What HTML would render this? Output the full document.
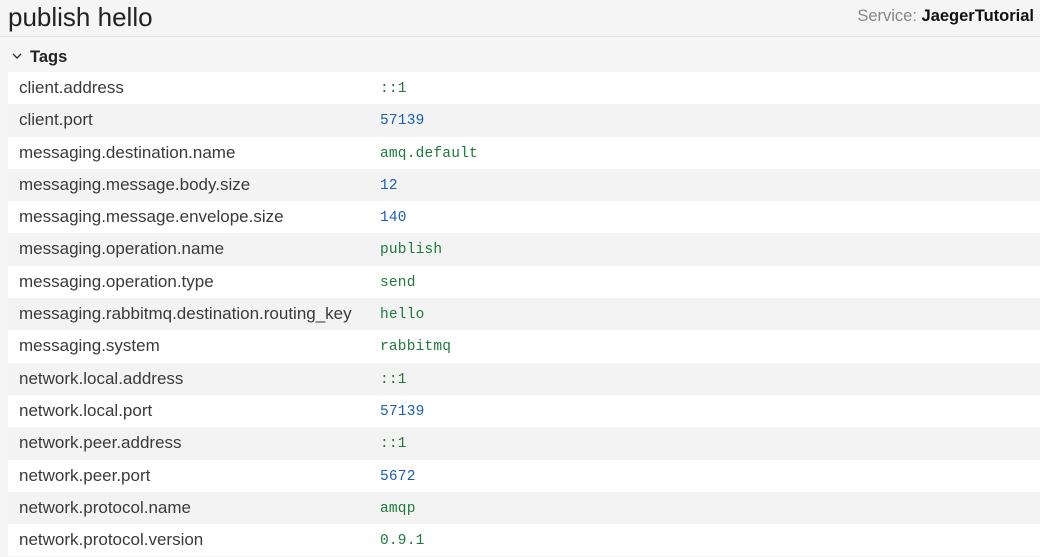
<!DOCTYPE html>
<html><head><meta charset="utf-8"><style>
html,body{margin:0;padding:0;width:1040px;height:552px;overflow:hidden;background:#f5f5f5;font-family:"Liberation Sans",sans-serif;}
.hdr{position:absolute;left:0;top:0;width:1040px;height:36px;border-bottom:1px solid #e2e2e2;}
.title{position:absolute;left:8px;top:2px;font-size:26px;color:#222;}
.svc{position:absolute;right:6px;top:7px;font-size:16.5px;color:#888;}
.svc b{color:#111;}
.tags{position:absolute;left:12px;top:48px;font-size:16.5px;font-weight:bold;color:#222;}
.tags svg{vertical-align:middle;margin-right:8px;position:relative;top:-2px}
.rows{position:absolute;left:8px;top:72px;width:1032px;}
.r{height:32.3px;line-height:32px;position:relative;font-size:17px;color:#3a3a3a;}
.r:nth-child(odd){background:#fff}
.r:nth-child(even){background:#f3f3f3}
.k{position:absolute;left:11px;top:0px}
.v{position:absolute;left:372px;top:1px;font-family:"Liberation Mono",monospace;font-size:14.5px;letter-spacing:0.2px;}
.s{color:#1d7a3c}.n{color:#1a5fb4}
</style></head><body>
<div class="hdr"><div class="title">publish hello</div><div class="svc">Service: <b>JaegerTutorial</b></div></div>
<div class="tags"><svg width="10" height="8" viewBox="0 0 10 8"><path d="M1 2 L5 6 L9 2" fill="none" stroke="#333" stroke-width="1.4"/></svg>Tags</div>
<div class="rows">
<div class="r"><span class="k">client.address</span><span class="v s">::1</span></div>
<div class="r"><span class="k">client.port</span><span class="v n">57139</span></div>
<div class="r"><span class="k">messaging.destination.name</span><span class="v s">amq.default</span></div>
<div class="r"><span class="k">messaging.message.body.size</span><span class="v n">12</span></div>
<div class="r"><span class="k">messaging.message.envelope.size</span><span class="v n">140</span></div>
<div class="r"><span class="k">messaging.operation.name</span><span class="v s">publish</span></div>
<div class="r"><span class="k">messaging.operation.type</span><span class="v s">send</span></div>
<div class="r"><span class="k">messaging.rabbitmq.destination.routing_key</span><span class="v s">hello</span></div>
<div class="r"><span class="k">messaging.system</span><span class="v s">rabbitmq</span></div>
<div class="r"><span class="k">network.local.address</span><span class="v s">::1</span></div>
<div class="r"><span class="k">network.local.port</span><span class="v n">57139</span></div>
<div class="r"><span class="k">network.peer.address</span><span class="v s">::1</span></div>
<div class="r"><span class="k">network.peer.port</span><span class="v n">5672</span></div>
<div class="r"><span class="k">network.protocol.name</span><span class="v s">amqp</span></div>
<div class="r"><span class="k">network.protocol.version</span><span class="v s">0.9.1</span></div>
</div>
</body></html>
